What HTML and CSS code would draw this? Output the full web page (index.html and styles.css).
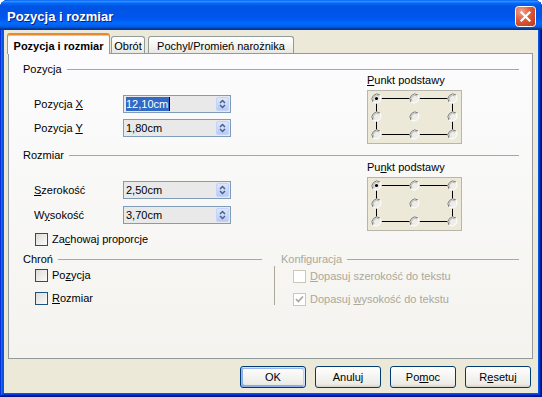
FILE: index.html
```html
<!DOCTYPE html>
<html lang="pl">

<head>
    <meta charset="UTF-8">
    <title>Pozycja i rozmiar</title>
    <link rel="stylesheet" href="styles.css">
</head>

<body>

    <div class="window">
        <!-- pasek tytułu -->
        <div class="titlebar">
            <span class="title">Pozycja i rozmiar</span>
            <span class="close">
                <svg width="21" height="21" viewBox="0 0 21 21">
                    <defs>
                        <radialGradient id="closeGrad" cx="0.3" cy="0.25" r="0.95">
                            <stop offset="0" stop-color="#f3a48f" />
                            <stop offset="0.45" stop-color="#e05b3c" />
                            <stop offset="1" stop-color="#c13814" />
                        </radialGradient>
                    </defs>
                    <rect x="0.5" y="0.5" width="20" height="20" rx="3" fill="url(#closeGrad)" stroke="#fff" />
                    <path d="M6.5 6.5 L14.5 14.5 M14.5 6.5 L6.5 14.5" stroke="#fff" stroke-width="2.2" stroke-linecap="square" />
                </svg>
            </span>
        </div>

        <div class="client">
            <!-- zakładki -->
            <div class="tabs">
                <div class="tab active">Pozycja i rozmiar</div>
                <div class="tab tab-obrot">Obrót</div>
                <div class="tab tab-pochyl">Pochyl/Promień narożnika</div>
            </div>

            <div class="page">
                <!-- Pozycja -->
                <div class="group-head"><span>Pozycja</span></div>
                <div class="group-body body-pos">
                    <div class="fields">
                        <div class="field">
                            <label>Pozycja <u>X</u></label>
                            <div class="spin">
                                <span class="value"><span class="sel">12,10cm</span><span class="caret"></span></span>
                                <span class="spin-btn">
                                    <svg width="11" height="12" viewBox="0 0 11 12">
                                        <path d="M3 5 L5.5 2.5 L8 5 M3 7 L5.5 9.5 L8 7" stroke="#4d6185" stroke-width="1.5" fill="none" />
                                    </svg>
                                </span>
                            </div>
                        </div>
                        <div class="field">
                            <label>Pozycja <u>Y</u></label>
                            <div class="spin">
                                <span class="value">1,80cm</span>
                                <span class="spin-btn">
                                    <svg width="11" height="12" viewBox="0 0 11 12">
                                        <path d="M3 5 L5.5 2.5 L8 5 M3 7 L5.5 9.5 L8 7" stroke="#4d6185" stroke-width="1.5" fill="none" />
                                    </svg>
                                </span>
                            </div>
                        </div>
                    </div>
                    <div class="refpoint">
                        <div class="ref-label"><u>P</u>unkt podstawy</div>
                        <svg class="ref-box" width="95" height="54" viewBox="0 0 95 54">
                            <defs>
                                <g id="rb">
                                    <circle r="5" fill="#eeede7" />
                                    <path d="M-3.5 3.5 A5 5 0 0 1 3.5 -3.5" stroke="#7c7c7c" fill="none" />
                                    <path d="M-2.5 2.5 A3.6 3.6 0 0 1 2.5 -2.5" stroke="#b9b9b4" fill="none" />
                                    <path d="M3.5 -3.5 A5 5 0 0 1 -3.5 3.5" stroke="#ffffff" fill="none" />
                                </g>
                            </defs>
                            <rect x="0.5" y="0.5" width="94" height="53" fill="#ece9d8" stroke="#b8b6aa" />
                            <path d="M9.5 8.5 H85.5 M9.5 44.5 H85.5 M9.5 8.5 V44.5 M85.5 8.5 V44.5" stroke="#000" />
                            <use href="#rb" x="9.5" y="8.5" />
                            <use href="#rb" x="47.5" y="8.5" />
                            <use href="#rb" x="85.5" y="8.5" />
                            <use href="#rb" x="9.5" y="26.5" />
                            <use href="#rb" x="47.5" y="26.5" />
                            <use href="#rb" x="85.5" y="26.5" />
                            <use href="#rb" x="9.5" y="44.5" />
                            <use href="#rb" x="47.5" y="44.5" />
                            <use href="#rb" x="85.5" y="44.5" />
                            <circle cx="9.5" cy="8.5" r="1.6" fill="#000" />
                        </svg>
                    </div>
                </div>

                <!-- Rozmiar -->
                <div class="group-head"><span>Rozmiar</span></div>
                <div class="group-body body-size">
                    <div class="fields">
                        <div class="field">
                            <label><u>S</u>zerokość</label>
                            <div class="spin">
                                <span class="value">2,50cm</span>
                                <span class="spin-btn">
                                    <svg width="11" height="12" viewBox="0 0 11 12">
                                        <path d="M3 5 L5.5 2.5 L8 5 M3 7 L5.5 9.5 L8 7" stroke="#4d6185" stroke-width="1.5" fill="none" />
                                    </svg>
                                </span>
                            </div>
                        </div>
                        <div class="field field-second">
                            <label>W<u>y</u>sokość</label>
                            <div class="spin">
                                <span class="value">3,70cm</span>
                                <span class="spin-btn">
                                    <svg width="11" height="12" viewBox="0 0 11 12">
                                        <path d="M3 5 L5.5 2.5 L8 5 M3 7 L5.5 9.5 L8 7" stroke="#4d6185" stroke-width="1.5" fill="none" />
                                    </svg>
                                </span>
                            </div>
                        </div>
                        <div class="check keep">
                            <span class="box"></span>
                            <span>Za<u>c</u>howaj proporcje</span>
                        </div>
                    </div>
                    <div class="refpoint refpoint-size">
                        <div class="ref-label">Pu<u>n</u>kt podstawy</div>
                        <svg class="ref-box" width="95" height="54" viewBox="0 0 95 54">
                            <rect x="0.5" y="0.5" width="94" height="53" fill="#ece9d8" stroke="#b8b6aa" />
                            <path d="M9.5 8.5 H85.5 M9.5 44.5 H85.5 M9.5 8.5 V44.5 M85.5 8.5 V44.5" stroke="#000" />
                            <use href="#rb" x="9.5" y="8.5" />
                            <use href="#rb" x="47.5" y="8.5" />
                            <use href="#rb" x="85.5" y="8.5" />
                            <use href="#rb" x="9.5" y="26.5" />
                            <use href="#rb" x="47.5" y="26.5" />
                            <use href="#rb" x="85.5" y="26.5" />
                            <use href="#rb" x="9.5" y="44.5" />
                            <use href="#rb" x="47.5" y="44.5" />
                            <use href="#rb" x="85.5" y="44.5" />
                            <circle cx="9.5" cy="8.5" r="1.6" fill="#000" />
                        </svg>
                    </div>
                </div>

                <!-- Chroń / Konfiguracja -->
                <div class="bottom">
                    <div class="protect">
                        <div class="group-head"><span>Chroń</span></div>
                        <div class="check first">
                            <span class="box"></span>
                            <span>Po<u>z</u>ycja</span>
                        </div>
                        <div class="check">
                            <span class="box"></span>
                            <span><u>R</u>ozmiar</span>
                        </div>
                    </div>
                    <div class="config">
                        <div class="group-head disabled"><span>Konfiguracja</span></div>
                        <div class="config-body">
                            <div class="check disabled">
                                <span class="box"></span>
                                <span><u>D</u>opasuj szerokość do tekstu</span>
                            </div>
                            <div class="check disabled">
                                <span class="box">
                                    <svg width="11" height="11" viewBox="0 0 11 11">
                                        <path d="M2 5 L4.3 7.5 L9 2.5" stroke="#aca899" stroke-width="1.8" fill="none" />
                                    </svg>
                                </span>
                                <span>Dopasuj <u>w</u>ysokość do tekstu</span>
                            </div>
                        </div>
                    </div>
                </div>
            </div>

            <!-- przyciski -->
            <div class="buttons">
                <button class="btn default">OK</button>
                <button class="btn">Anuluj</button>
                <button class="btn">Po<u>m</u>oc</button>
                <button class="btn">R<u>e</u>setuj</button>
            </div>
        </div>
    </div>

</body>

</html>
```

FILE: styles.css
```css
body {
    margin: 0;
    background-color: #fff;
    font-family: 'Liberation Sans', Arial, sans-serif;
    font-size: 11px;
    color: #000;
}

.window {
    width: 542px;
    height: 397px;
    display: flex;
    flex-direction: column;
    background-color: #0855dd;
    border-radius: 8px 8px 0 0;
    box-shadow: inset -1px -1px #00138c, inset 1px 1px #0831d9, inset -2px -2px #001ea0,
        inset 2px 2px #166aee, inset -3px -3px #003bda, inset 3px 3px #0855dd;
}

.titlebar {
    height: 30px;
    box-sizing: border-box;
    padding: 2px 6px 0 7px;
    display: flex;
    align-items: center;
    justify-content: space-between;
    border-radius: 8px 8px 0 0;
    background: linear-gradient(180deg, #0058ee 0%, #3593ff 4%, #288eff 6%, #127dff 8%, #036ffc 10%,
            #0262ee 14%, #0057e5 20%, #0054e3 24%, #0055eb 56%, #005bf5 66%, #026afe 76%,
            #0062ef 86%, #0052d6 92%, #0040ab 94%, #003092 100%);
}

.title {
    color: #fff;
    font-weight: bold;
    font-size: 13px;
    text-shadow: 1px 1px #0f1f7a;
}

.close svg {
    display: block;
}

.client {
    flex: 1;
    margin: 0 4px 4px 4px;
    padding: 3px 5px 0 4px;
    background-color: #ece9d8;
    display: flex;
    flex-direction: column;
}

/* zakładki */
.tabs {
    height: 20px;
    display: flex;
    align-items: flex-end;
}

.tab {
    box-sizing: border-box;
    height: 17px;
    padding-top: 3px;
    line-height: 13px;
    text-align: center;
    white-space: nowrap;
    border: 1px solid #919b9c;
    border-bottom: none;
    border-radius: 3px 3px 0 0;
    background: linear-gradient(180deg, #fff, #f3f3ef 60%, #e8e7e0);
}

.tab.active {
    position: relative;
    z-index: 1;
    width: 103px;
    height: 21px;
    margin-left: -1px;
    margin-bottom: -1px;
    padding-top: 5px;
    font-weight: bold;
    border-top: 2px solid #e68b2c;
    box-shadow: inset 0 1px #ffc83c;
    background: #fcfcfe;
}

.tab-obrot {
    width: 34px;
    margin-left: 1px;
}

.tab-pochyl {
    width: 146px;
    margin-left: 3px;
}

.page {
    height: 306px;
    box-sizing: border-box;
    padding: 9px 13px 0 14px;
    border: 1px solid #919b9c;
    background: linear-gradient(180deg, #fcfcfe, #f4f3ee);
}

.group-head {
    height: 13px;
    line-height: 13px;
    display: flex;
    align-items: center;
}

.group-head::after {
    content: "";
    flex: 1;
    margin-left: 5px;
    border-top: 1px solid #aca899;
}

.group-head.disabled {
    color: #aca899;
    padding-left: 7px;
}

.group-body {
    display: flex;
    align-items: flex-start;
}

.body-pos {
    height: 73px;
}

.body-size {
    height: 91px;
}

.fields {
    width: 344px;
    padding-top: 19px;
}

.field {
    height: 18px;
    display: flex;
    align-items: center;
    padding-left: 11px;
    margin-bottom: 6px;
}

.field-second {
    margin-top: 7px;
}

.body-size .field {
    margin-bottom: 0;
}

.field label {
    width: 89px;
}

.spin {
    width: 108px;
    height: 18px;
    box-sizing: border-box;
    padding: 1px 1px 1px 2px;
    border: 1px solid #7f9db9;
    background-color: #e9e9e9;
    display: flex;
    align-items: center;
    justify-content: space-between;
}

.value {
    display: flex;
    align-items: center;
    line-height: 14px;
}

.sel {
    background-color: #316ac5;
    color: #fff;
    padding-right: 1px;
}

.caret {
    width: 1px;
    height: 14px;
    background-color: #000;
}

.spin-btn {
    width: 13px;
    height: 14px;
    box-sizing: border-box;
    border: 1px solid #c3d3fa;
    border-radius: 2px;
    background: linear-gradient(180deg, #dce7fe, #b8cbf6);
    display: flex;
    align-items: center;
    justify-content: center;
}

.spin-btn svg {
    display: block;
}

.refpoint {
    margin-top: -2px;
}

.refpoint-size {
    margin-top: -1px;
}

.ref-label {
    line-height: 13px;
    margin-bottom: 3px;
}

.ref-box {
    display: block;
}

/* pola wyboru */
.check {
    height: 13px;
    line-height: 13px;
    display: flex;
    align-items: center;
    padding-left: 12px;
    margin-top: 10px;
}

.check .box {
    width: 13px;
    height: 13px;
    box-sizing: border-box;
    margin-right: 4px;
    border: 1px solid #1c5180;
    background: linear-gradient(135deg, #dcdcd7, #fbfbf9);
    display: flex;
    align-items: center;
    justify-content: center;
}

.check.keep {
    margin-top: 9px;
}

.check.first {
    margin-top: 3px;
}

.check.disabled {
    color: #aca899;
    padding-left: 0;
}

.check.disabled .box {
    border-color: #cac8bb;
    background: #fff;
}

.bottom {
    display: flex;
}

.protect {
    width: 239px;
}

.config {
    width: 245px;
    margin-left: 12px;
}

.config-body {
    height: 39px;
    box-sizing: border-box;
    padding: 4px 0 0 18px;
    border-left: 1px solid #aca899;
}

.config-body .check:first-child {
    margin-top: 0;
}

/* przyciski */
.buttons {
    margin-top: 7px;
    padding-right: 2px;
    display: flex;
    justify-content: flex-end;
    gap: 9px;
}

.btn {
    width: 66px;
    height: 22px;
    padding: 0;
    font-family: inherit;
    font-size: 11px;
    color: #000;
    border: 1px solid #003c74;
    border-radius: 3px;
    background: linear-gradient(180deg, #fff, #ecebe6 86%, #d6d0c5);
}

.btn.default {
    box-shadow: inset -1px 1px #cee7ff, inset 1px 2px #98b8ea, inset -2px 2px #bcd4f6,
        inset 1px -1px #89ade4, inset 2px -2px #89ade4;
}
```
